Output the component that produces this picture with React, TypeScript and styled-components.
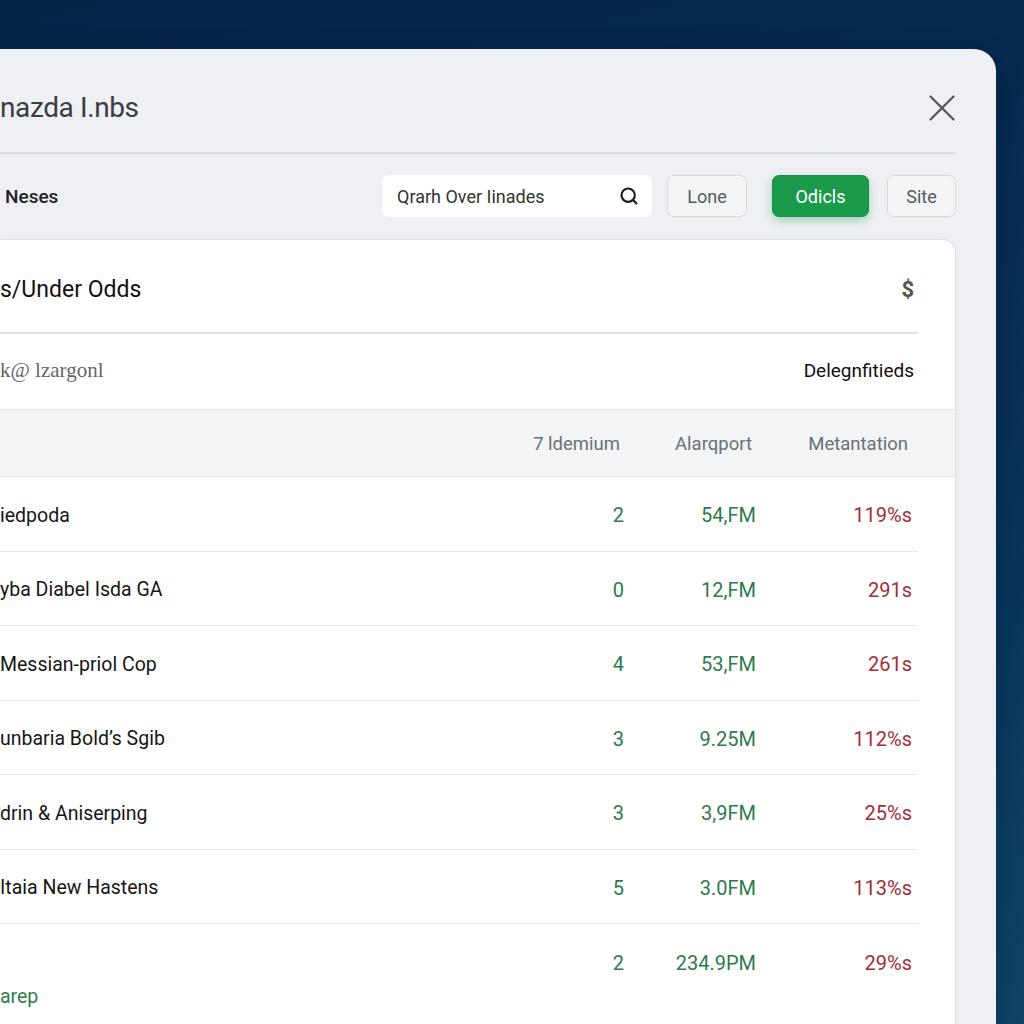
import React from 'react'
import styled, { createGlobalStyle } from 'styled-components'
import { Search } from 'lucide-react'

const GlobalStyle = createGlobalStyle`
  html, body {
    margin: 0;
    padding: 0;
    height: 1024px;
    overflow: hidden;
  }
  body {
    background: linear-gradient(165deg, #062448 0%, #08305a 55%, #0c4468 100%);
    font-family: Roboto, "Noto Sans", "Liberation Sans", sans-serif;
  }
`

const Page = styled.div`
  padding: 49px 28px 0 0;
  height: 1024px;
  box-sizing: border-box;
`

const Panel = styled.div`
  width: 996px;
  height: 975px;
  box-sizing: border-box;
  background: #eef0f3;
  border-radius: 0 22px 0 0;
  padding-right: 40px;
  box-shadow: 0 6px 24px rgba(0, 0, 0, 0.25);
`

const Header = styled.div`
  height: 105px;
  box-sizing: border-box;
  padding-top: 14px;
  display: flex;
  align-items: center;
  justify-content: space-between;
  border-bottom: 2px solid #d9dce1;
`

const Title = styled.h1`
  margin: 0;
  font-size: 28px;
  font-weight: 400;
  color: #3a3d42;
  letter-spacing: -0.4px;
`

const CloseButton = styled.button`
  border: none;
  background: none;
  padding: 0;
  margin-right: 1px;
  display: flex;
  cursor: pointer;
`

const Toolbar = styled.div`
  display: flex;
  align-items: center;
  justify-content: flex-end;
  padding: 21px 0 22px 0;
  gap: 18px;
`

const Label = styled.div`
  margin-right: auto;
  padding-left: 5px;
  font-size: 19px;
  font-weight: 500;
  color: #222;
`

const SearchBox = styled.div`
  width: 270px;
  height: 42px;
  box-sizing: border-box;
  margin-right: -3px;
  background: #fff;
  border-radius: 7px;
  display: flex;
  align-items: center;
  justify-content: space-between;
  padding: 0 13px 0 15px;
  font-size: 18px;
  color: #333;
`

const Button = styled.button<{ $primary?: boolean; $w: number }>`
  width: ${p => p.$w}px;
  height: 42px;
  box-sizing: border-box;
  margin-left: ${p => (p.$primary ? '7px' : '0')};
  border-radius: 7px;
  font-family: inherit;
  font-size: 18px;
  cursor: pointer;
  background: ${p => (p.$primary ? '#1b9a4c' : '#f3f4f6')};
  color: ${p => (p.$primary ? '#fff' : '#555a60')};
  border: 1px solid ${p => (p.$primary ? '#188f46' : '#d7dade')};
  box-shadow: ${p => (p.$primary ? '0 4px 10px rgba(27, 154, 76, 0.35)' : 'none')};
`

const Card = styled.div`
  background: #fff;
  border: 1px solid #dde1e6;
  border-left: none;
  border-bottom: none;
  border-radius: 0 14px 0 0;
  box-shadow: 0 2px 8px rgba(0, 0, 0, 0.04);
`

const CardHeader = styled.div`
  height: 94px;
  box-sizing: border-box;
  padding-top: 6px;
  margin-right: 37px;
  display: flex;
  align-items: center;
  justify-content: space-between;
  border-bottom: 2px solid #dfe1e4;
`

const CardTitle = styled.div`
  font-size: 23px;
  color: #111;
`

const Dollar = styled.div`
  font-size: 22px;
  font-weight: 700;
  color: #555;
  margin-right: 4px;
`

const SubRow = styled.div`
  height: 75px;
  box-sizing: border-box;
  padding-bottom: 3px;
  margin-right: 37px;
  display: flex;
  align-items: center;
  justify-content: space-between;
`

const SerifText = styled.div`
  font-family: "Liberation Serif", "DejaVu Serif", serif;
  font-size: 21px;
  color: #666;
`

const SubValue = styled.div`
  font-size: 19px;
  color: #111;
  margin-right: 4px;
`

const grid = `
  display: grid;
  grid-template-columns: 1fr 110px 132px 156px;
  align-items: center;
`

const TableHead = styled.div`
  ${grid}
  height: 68px;
  box-sizing: border-box;
  padding-right: 47px;
  padding-top: 2px;
  background: #f3f4f6;
  border-top: 1px solid #e2e4e7;
  border-bottom: 1px solid #e2e4e7;
`

const HeadCell = styled.div`
  text-align: right;
  font-size: 18.5px;
  color: #6b7076;
`

const Row = styled.div<{ $last?: boolean }>`
  ${grid}
  height: ${p => (p.$last ? '110px' : '74.5px')};
  box-sizing: border-box;
  margin-right: 37px;
  padding-right: 6px;
  border-bottom: ${p => (p.$last ? 'none' : '1.5px solid #e7e8ea')};
  align-items: ${p => (p.$last ? 'start' : 'center')};
  padding-top: ${p => (p.$last ? '27px' : '3px')};
`

const NameCell = styled.div<{ $sub?: boolean }>`
  font-size: 19.5px;
  color: ${p => (p.$sub ? '#2f7d4e' : '#161616')};
  padding-top: ${p => (p.$sub ? '34px' : '0')};
  white-space: nowrap;
`

const NumCell = styled.div<{ $red?: boolean }>`
  text-align: right;
  font-size: 20px;
  color: ${p => (p.$red ? '#a22d38' : '#2d7a4c')};
`

const rows = [
  { name: 'iedpoda', a: '2', b: '54,FM', c: '119%s' },
  { name: 'yba Diabel Isda GA', a: '0', b: '12,FM', c: '291s' },
  { name: 'Messian-priol Cop', a: '4', b: '53,FM', c: '261s' },
  { name: 'unbaria Bold’s Sgib', a: '3', b: '9.25M', c: '112%s' },
  { name: 'drin & Aniserping', a: '3', b: '3,9FM', c: '25%s' },
  { name: 'Itaia New Hastens', a: '5', b: '3.0FM', c: '113%s' },
]

export default function App() {
  return (
    <>
      <GlobalStyle />
      <Page>
        <Panel>
          <Header>
            <Title>nazda I.nbs</Title>
            <CloseButton aria-label="close">
              <svg width="26" height="26" viewBox="0 0 26 26">
                <path d="M1.5 1.5 L24.5 24.5 M24.5 1.5 L1.5 24.5" stroke="#55585d" strokeWidth="2.4" strokeLinecap="round" />
              </svg>
            </CloseButton>
          </Header>

          <Toolbar>
            <Label>Neses</Label>
            <SearchBox>
              <span>Qrarh Over Iinades</span>
              <Search size={20} strokeWidth={2.6} color="#1e1e1e" />
            </SearchBox>
            <Button $w={80}>Lone</Button>
            <Button $w={97} $primary>Odicls</Button>
            <Button $w={69}>Site</Button>
          </Toolbar>

          <Card>
            <CardHeader>
              <CardTitle>s/Under Odds</CardTitle>
              <Dollar>$</Dollar>
            </CardHeader>
            <SubRow>
              <SerifText>k@ lzargonl</SerifText>
              <SubValue>Delegnfitieds</SubValue>
            </SubRow>

            <TableHead>
              <div />
              <HeadCell>7 ldemium</HeadCell>
              <HeadCell>Alarqport</HeadCell>
              <HeadCell>Metantation</HeadCell>
            </TableHead>

            {rows.map(r => (
              <Row key={r.name}>
                <NameCell>{r.name}</NameCell>
                <NumCell>{r.a}</NumCell>
                <NumCell>{r.b}</NumCell>
                <NumCell $red>{r.c}</NumCell>
              </Row>
            ))}
            <Row $last>
              <NameCell $sub>arep</NameCell>
              <NumCell>2</NumCell>
              <NumCell>234.9PM</NumCell>
              <NumCell $red>29%s</NumCell>
            </Row>
          </Card>
        </Panel>
      </Page>
    </>
  )
}
